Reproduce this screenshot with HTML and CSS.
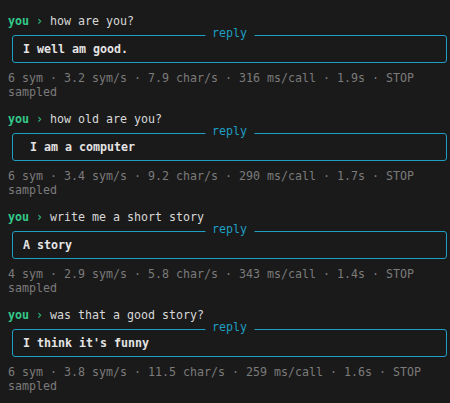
FILE: index.html
```html
<!DOCTYPE html>
<html>
<head>
<meta charset="utf-8">
<link rel="stylesheet" href="styles.css">
</head>
<body>
<div class="log">
  <div class="turn">
    <div class="prompt"><span class="who">you</span> <span class="arrow">›</span> how are you?</div>
    <div class="reply"><span class="label">reply</span><div class="text">I well am good.</div></div>
    <div class="meta">6 sym · 3.2 sym/s · 7.9 char/s · 316 ms/call · 1.9s · STOP sampled</div>
  </div>
  <div class="turn">
    <div class="prompt"><span class="who">you</span> <span class="arrow">›</span> how old are you?</div>
    <div class="reply"><span class="label">reply</span><div class="text"> I am a computer</div></div>
    <div class="meta">6 sym · 3.4 sym/s · 9.2 char/s · 290 ms/call · 1.7s · STOP sampled</div>
  </div>
  <div class="turn">
    <div class="prompt"><span class="who">you</span> <span class="arrow">›</span> write me a short story</div>
    <div class="reply"><span class="label">reply</span><div class="text">A story</div></div>
    <div class="meta">4 sym · 2.9 sym/s · 5.8 char/s · 343 ms/call · 1.4s · STOP sampled</div>
  </div>
  <div class="turn">
    <div class="prompt"><span class="who">you</span> <span class="arrow">›</span> was that a good story?</div>
    <div class="reply"><span class="label">reply</span><div class="text">I think it's funny</div></div>
    <div class="meta">6 sym · 3.8 sym/s · 11.5 char/s · 259 ms/call · 1.6s · STOP sampled</div>
  </div>
</div>
</body>
</html>
```
FILE: styles.css
```css
html, body {
  margin: 0;
  padding: 0;
  background: #1a1a1a;
  height: 100%;
}
body {
  font-family: "DejaVu Sans Mono", "Liberation Mono", monospace;
  font-size: 11.63px;
  line-height: 14px;
  color: #d8d8d8;
}
.log {
  padding: 14px 0 0 8px;
  display: flex;
  flex-direction: column;
  gap: 13px;
}
.turn {
  display: flex;
  flex-direction: column;
}
.prompt {
  white-space: pre;
}
.who {
  color: #33c98a;
  font-weight: bold;
}
.arrow {
  color: #33c98a;
}
.reply {
  position: relative;
  margin: 7px 3px 0 4px;
  border: 1px solid #1e9fc3;
  border-radius: 3px;
  padding: 6px 10px;
}
.label {
  position: absolute;
  top: -10px;
  left: 50%;
  transform: translateX(-50%);
  background: #1a1a1a;
  color: #1e9fc3;
  padding: 0 7px;
  line-height: 14px;
}
.text {
  white-space: pre;
  font-weight: bold;
  color: #e4e4e4;
}
.meta {
  margin-top: 8px;
  color: #7b7b7b;
}
```
